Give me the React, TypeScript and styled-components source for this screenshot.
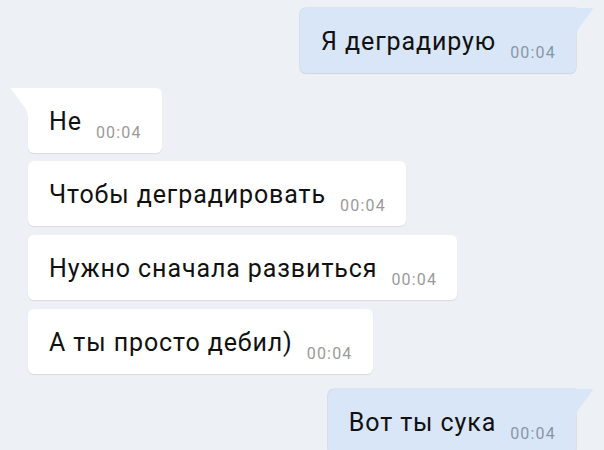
import styled, { createGlobalStyle } from 'styled-components';

type Side = 'in' | 'out';

interface Message {
  id: number;
  side: Side;
  text: string;
  time: string;
}

const messages: Message[] = [
  { id: 1, side: 'out', text: 'Я деградирую', time: '00:04' },
  { id: 2, side: 'in', text: 'Не', time: '00:04' },
  { id: 3, side: 'in', text: 'Чтобы деградировать', time: '00:04' },
  { id: 4, side: 'in', text: 'Нужно сначала развиться', time: '00:04' },
  { id: 5, side: 'in', text: 'А ты просто дебил)', time: '00:04' },
  { id: 6, side: 'out', text: 'Вот ты сука', time: '00:04' },
];

const GlobalStyle = createGlobalStyle`
  html, body {
    margin: 0;
    padding: 0;
    background: #edf0f4;
  }
  body {
    font-family: Roboto, 'Liberation Sans', sans-serif;
  }
`;

const Tail: React.FC<{ side: Side }> = ({ side }) => (
  <TailSvg $side={side} width='20' height='32' viewBox='0 0 20 32'>
    {side === 'out' ? (
      <path d='M0 0 H19.5 Q20.5 0.5 19.6 1.6 L6.2 19.5 Q3 24 3 31 V32 H0 Z' />
    ) : (
      <path d='M20 0 H0.5 Q-0.5 0.5 0.4 1.6 L13.8 19.5 Q17 24 17 31 V32 H20 Z' />
    )}
  </TailSvg>
);

const App: React.FC = () => {
  return (
    <>
      <GlobalStyle />
      <Chat>
        {messages.map((m, i) => {
          const prev = messages[i - 1];
          const first = !prev || prev.side !== m.side;
          return (
            <Row key={m.id} $side={m.side} $first={first} $top={i === 0}>
              <Bubble $side={m.side} $tail={first}>
                {first && <Tail side={m.side} />}
                <Text>{m.text}</Text>
                <Time $side={m.side}>{m.time}</Time>
              </Bubble>
            </Row>
          );
        })}
      </Chat>
    </>
  );
};

const Chat = styled.div`
  width: 604px;
  height: 450px;
  box-sizing: border-box;
  padding: 7.5px 28px 0 28px;
  display: flex;
  flex-direction: column;
  overflow: hidden;
`;

const Row = styled.div<{ $side: Side; $first: boolean; $top: boolean }>`
  display: flex;
  justify-content: ${(p) => (p.$side === 'out' ? 'flex-end' : 'flex-start')};
  margin-top: ${(p) => (p.$top ? '0' : p.$first ? '15px' : '8.7px')};
  flex-shrink: 0;
`;

const Bubble = styled.div<{ $side: Side; $tail: boolean }>`
  position: relative;
  display: flex;
  align-items: flex-start;
  gap: 14px;
  box-sizing: border-box;
  height: 65px;
  padding: 19px 20px 0 21px;
  border-radius: 6px;
  background: ${(p) => (p.$side === 'out' ? '#d9e6f7' : '#ffffff')};
  box-shadow: ${(p) =>
    p.$side === 'out'
      ? '0 0 0 0.6px #c9d7e9, 0 1px 1px rgba(120, 140, 170, 0.25)'
      : '0 1px 1px rgba(120, 130, 150, 0.18)'};

  ${(p) =>
    p.$tail &&
    (p.$side === 'out' ? 'border-top-right-radius: 0;' : 'border-top-left-radius: 0;')}
`;

const TailSvg = styled.svg<{ $side: Side }>`
  position: absolute;
  top: 0;
  ${(p) => (p.$side === 'out' ? 'right: -17px;' : 'left: -17px;')}
  fill: ${(p) => (p.$side === 'out' ? '#d9e6f7' : '#ffffff')};
  overflow: visible;
`;

const Text = styled.span`
  font-size: 25px;
  line-height: 29px;
  letter-spacing: 0.9px;
  color: #111111;
  white-space: nowrap;
`;

const Time = styled.span<{ $side: Side }>`
  margin-top: 16px;
  font-size: 16px;
  line-height: 19px;
  letter-spacing: 1.2px;
  color: ${(p) => (p.$side === 'out' ? '#8896a8' : '#9a9a9a')};
  white-space: nowrap;
`;

export default App;
